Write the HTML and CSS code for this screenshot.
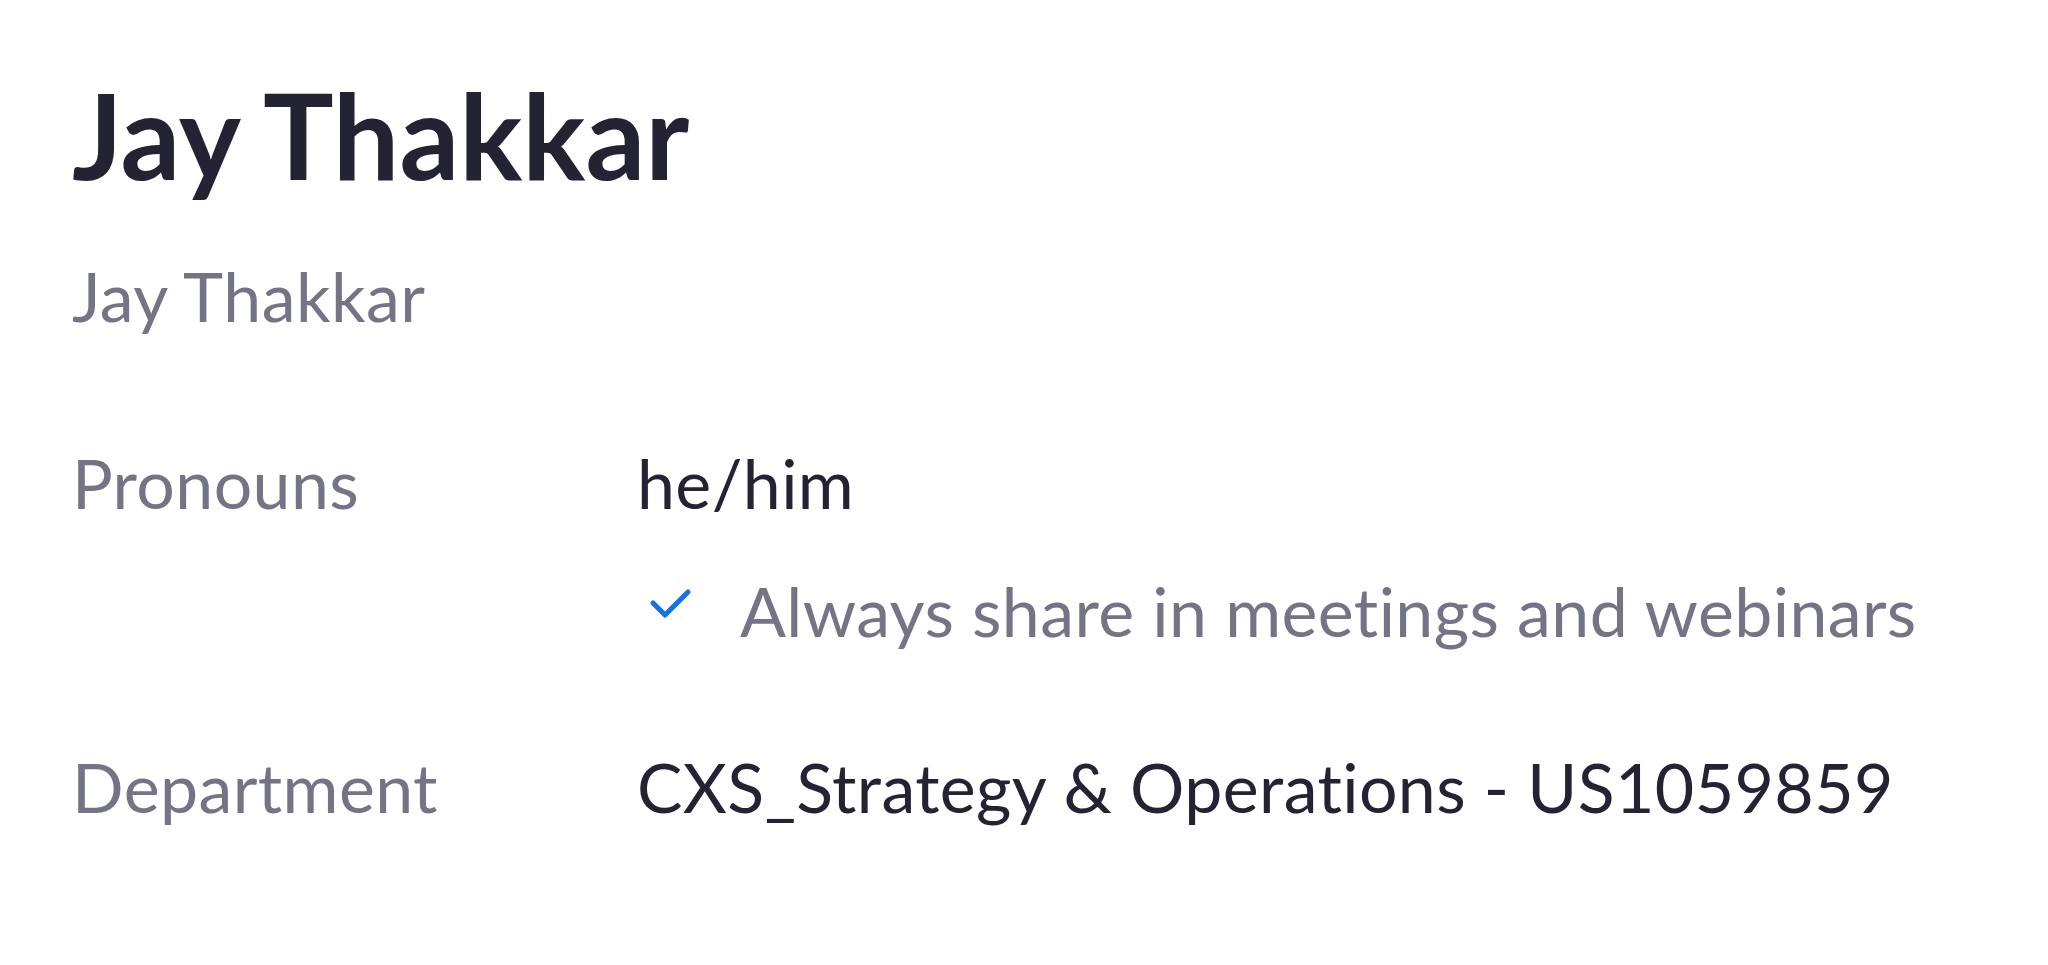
FILE: index.html
```html
<!DOCTYPE html>
<html lang="en">
<head>
<meta charset="utf-8">
<title>Profile</title>
<link rel="stylesheet" href="styles.css">
</head>
<body>
<div class="page">
  <h1 class="name">Jay Thakkar</h1>
  <div class="display-name">Jay Thakkar</div>
  <div class="fields">
    <div class="field">
      <div class="label">Pronouns</div>
      <div class="value">
        <div class="value-text">he/him</div>
        <div class="option">
          <svg class="check" width="48" height="40" viewBox="0 0 48 40" aria-hidden="true">
            <path d="M5 17 L17 29 L40 6" fill="none" stroke="#0e72ed" stroke-width="5" stroke-linecap="round" stroke-linejoin="round"/>
          </svg>
          <span class="option-text">Always share in meetings and webinars</span>
        </div>
      </div>
    </div>
    <div class="field dept">
      <div class="label">Department</div>
      <div class="value">
        <div class="value-text">CXS_Strategy &amp; Operations - US1059859</div>
      </div>
    </div>
  </div>
</div>
</body>
</html>
```

FILE: styles.css
```css
html, body {
  margin: 0;
  padding: 0;
  background: #ffffff;
}

body {
  font-family: Lato, "Open Sans", "Liberation Sans", sans-serif;
  color: #232333;
}

.page {
  padding: 64px 0 0 72px;
}

.name {
  margin: 0;
  font-size: 118px;
  font-weight: 700;
  line-height: 1.2;
  color: #232333;
}

.display-name {
  margin-top: 49px;
  font-size: 68px;
  letter-spacing: 0.5px;
  line-height: 1.2;
  color: #747487;
}

.fields {
  margin-top: 107px;
  display: flex;
  flex-direction: column;
  gap: 96px;
}

.field {
  display: flex;
  font-size: 68px;
  letter-spacing: 0.4px;
  line-height: 80px;
}

.label {
  width: 565px;
  flex: none;
  color: #747487;
}

.value {
  display: flex;
  flex-direction: column;
  gap: 48px;
}

.value-text {
  color: #232333;
}

.option {
  display: flex;
  align-items: center;
}

.check {
  flex: none;
  margin-left: 11px;
  margin-right: 44px;
  margin-top: -10px;
}

.option-text {
  color: #747487;
}
```
